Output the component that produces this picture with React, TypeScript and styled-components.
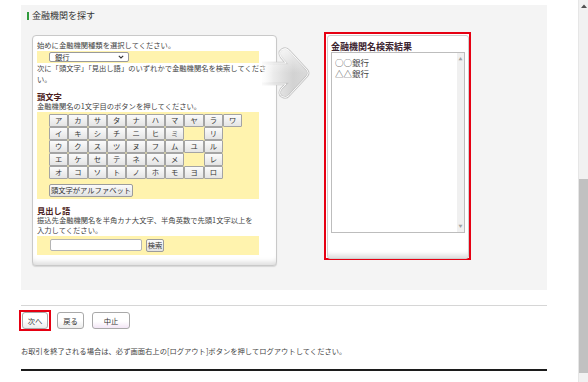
import React from 'react';
import styled, {createGlobalStyle} from "styled-components";

const GlobalStyle = createGlobalStyle`
  html, body {
    margin: 0;
    padding: 0;
    background: #ffffff;
    overflow: hidden;
  }
  body {
    font-family: "Noto Sans CJK JP", "Noto Sans", sans-serif;
    color: #333333;
  }
`;

const Page = styled.div`
  display: flex;
  width: 588px;
  height: 382px;
`;

const Main = styled.div`
  width: 578px;
  box-sizing: border-box;
  padding: 5px 31px 0 21px;
`;

const Panel = styled.section`
  height: 285px;
  background: #f4f4f4;
`;

const Title = styled.h2`
  display: flex;
  align-items: center;
  gap: 3px;
  margin: 0;
  padding: 5px 0 0 6px;
  font-size: 9px;
  line-height: 12px;
  font-weight: normal;
  color: #333;

  &::before {
    content: "";
    width: 2px;
    height: 8px;
    background: #2f9a3c;
  }
`;

const SearchRow = styled.div`
  display: flex;
  align-items: flex-start;
  margin-top: 10px;
  padding-left: 11px;
`;

const SearchCard = styled.div`
  width: 245px;
  height: 231px;
  margin-top: 3px;
  box-sizing: border-box;
  padding: 4px 4px 0 4px;
  background: #ffffff;
  border: 1px solid #c9c9c9;
  border-radius: 4px;
  box-shadow: inset 0 -6px 5px -3px rgba(0, 0, 0, .13), 0 1px 1px rgba(0, 0, 0, .12);
  font-size: 7.3px;
`;

const Text = styled.p<{ $lh?: number }>`
  margin: 0;
  line-height: ${p => p.$lh ?? 11}px;
  color: #444;
`;

const Heading = styled.h3`
  margin: 6px 0 0;
  font-size: 8.3px;
  line-height: 10px;
  font-weight: bold;
  color: #4a2020;
`;

const Band = styled.div<{ $pad: string }>`
  width: 222px;
  box-sizing: border-box;
  padding: ${p => p.$pad};
  background: #fff3ae;
`;

const SelectBox = styled.div`
  display: flex;
  align-items: center;
  justify-content: space-between;
  width: 80px;
  height: 10px;
  box-sizing: border-box;
  padding: 0 4px 0 5px;
  background: #ffffff;
  border: 1px solid #9a9a9a;
  border-radius: 2px;
  font-size: 7.3px;
  line-height: 8px;
  color: #333;
`;

const KanaGrid = styled.div`
  display: grid;
  grid-template-columns: repeat(10, 19.35px);
  grid-auto-rows: 13px;
`;

const KanaButton = styled.button`
  margin: 0;
  padding: 0;
  box-sizing: border-box;
  border: 1px solid #a4a4a4;
  border-radius: 1px;
  background: linear-gradient(#fbfbfb, #e4e4e4);
  font-family: inherit;
  font-size: 7.3px;
  line-height: 11px;
  color: #333;
`;

const SmallButton = styled.button<{ $w: number; $gap?: number }>`
  display: block;
  width: ${p => p.$w}px;
  height: 13px;
  margin: ${p => p.$gap ?? 0}px 0 0;
  padding: 0;
  box-sizing: border-box;
  border: 1px solid #9c9c9c;
  border-radius: 2px;
  background: linear-gradient(#fbfbfb, #e2e2e2);
  font-family: inherit;
  font-size: 7.3px;
  line-height: 11px;
  color: #333;
`;

const InputRow = styled.div`
  display: flex;
  align-items: center;
  gap: 4px;
`;

const TextInput = styled.input`
  width: 92px;
  height: 12px;
  margin: 0;
  padding: 0 2px;
  box-sizing: border-box;
  border: 1px solid #b4b4b4;
  border-radius: 2px;
  background: #ffffff;
`;

const ArrowBox = styled.div`
  width: 48px;
  height: 54px;
  margin: 15px 0 0 -15px;
  flex: none;
`;

const Highlight = styled.div`
  flex: none;
  border: 2px solid #e60012;
  background: #ffffff;
`;

const ResultFrame = styled(Highlight)`
  width: 147px;
  height: 228px;
  margin-left: 14px;
  box-sizing: border-box;
  padding: 1px 0 0 1px;
`;

const ResultCard = styled.div`
  height: 224px;
  box-sizing: border-box;
  padding: 5px 3px 0 3px;
  border: 1px solid #cfcfcf;
  border-radius: 3px;
  box-shadow: inset 0 -7px 5px -4px rgba(0, 0, 0, .14);
`;

const ResultTitle = styled.h3`
  margin: 0;
  font-size: 9px;
  line-height: 11px;
  font-weight: bold;
  color: #3c2430;
`;

const ListBox = styled.div`
  display: flex;
  width: 134px;
  height: 181px;
  box-sizing: border-box;
  border: 1px solid #bdbdbd;
  background: #fff;
`;

const ListItems = styled.ul`
  flex: 1;
  margin: 0;
  padding: 4px 0 0 3px;
  list-style: none;
  font-size: 8.5px;
  line-height: 10.7px;
  color: #444;
`;

const ListScroll = styled.div`
  display: flex;
  flex-direction: column;
  justify-content: space-between;
  align-items: center;
  width: 7px;
  padding: 4px 0;
  background: #f0f0f0;
  font-size: 4px;
  line-height: 4px;
  color: #a0a0a0;
`;

const Divider = styled.hr`
  margin: 15px 0 0;
  border: none;
  height: 1px;
  background: #d6d6d6;
`;

const ButtonRow = styled.div`
  display: flex;
  align-items: center;
  margin: 4px 0 0 -2px;
`;

const NavFrame = styled(Highlight)`
  padding: 0 1px;
  margin-right: 6px;
`;

const NavButton = styled.button<{ $w: number; $tone?: "pink" }>`
  display: block;
  width: ${p => p.$w}px;
  height: 17px;
  margin: 0 8px 0 0;
  padding: 0;
  box-sizing: border-box;
  border: 1px solid #a9a9a9;
  border-radius: 3px;
  background: ${p => p.$tone === "pink"
    ? "linear-gradient(#ffffff 55%, #f3e6f6)"
    : "linear-gradient(#ffffff 50%, #ececec)"};
  font-family: inherit;
  font-size: 7.3px;
  color: #333;

  ${NavFrame} & {
    margin: 0;
  }
`;

const Note = styled.p`
  margin: 15px 0 0;
  font-size: 7.3px;
  line-height: 10px;
  color: #444;
`;

const Rule = styled.div`
  margin-top: 13px;
  height: 2px;
  background: #1c1c1c;
`;

const PageScroll = styled.div`
  display: flex;
  flex-direction: column;
  width: 10px;
  background: #f1f1f1;
  border-left: 1px solid #e6e6e6;
  box-sizing: border-box;
`;

const ScrollArrow = styled.div`
  display: flex;
  justify-content: center;
  align-items: center;
  height: 11px;
`;

const ScrollThumb = styled.div<{ $top: number; $h: number }>`
  margin: ${p => p.$top}px 0 0 0;
  height: ${p => p.$h}px;
  background: #c1c1c1;
`;

const KANA = [
    ["ア", "カ", "サ", "タ", "ナ", "ハ", "マ", "ヤ", "ラ", "ワ"],
    ["イ", "キ", "シ", "チ", "ニ", "ヒ", "ミ", "", "リ", ""],
    ["ウ", "ク", "ス", "ツ", "ヌ", "フ", "ム", "ユ", "ル", ""],
    ["エ", "ケ", "セ", "テ", "ネ", "ヘ", "メ", "", "レ", ""],
    ["オ", "コ", "ソ", "ト", "ノ", "ホ", "モ", "ヨ", "ロ", ""],
];

const ARROW_PATH = "M-4,16 L24,16 L19,10 Q16,5 20,2.5 Q24,0 27,3.5 L45,23 Q47.5,26 45,29 L27,48.5 Q24,52 20,49.5 Q16,47 19,42 L24,37 L-4,37 Z";

function Arrow() {
    return (
        <ArrowBox>
            <svg width="48" height="54" viewBox="0 0 48 54">
                <defs>
                    <linearGradient id="arrowFill" x1="0" y1="0" x2="1" y2="0">
                        <stop offset="0" stopColor="#ffffff" stopOpacity="0" />
                        <stop offset="0.3" stopColor="#ececec" />
                        <stop offset="0.7" stopColor="#d2d2d2" />
                        <stop offset="1" stopColor="#dadada" />
                    </linearGradient>
                    <linearGradient id="arrowEdge" x1="0" y1="0" x2="1" y2="0">
                        <stop offset="0" stopColor="#d0d0d0" stopOpacity="0" />
                        <stop offset="0.4" stopColor="#c8c8c8" />
                        <stop offset="1" stopColor="#c0c0c0" />
                    </linearGradient>
                    <linearGradient id="arrowShine" x1="0" y1="0" x2="0" y2="1">
                        <stop offset="0" stopColor="#ffffff" stopOpacity="0.7" />
                        <stop offset="0.5" stopColor="#ffffff" stopOpacity="0" />
                    </linearGradient>
                </defs>
                <path d={ARROW_PATH} fill="url(#arrowFill)" stroke="url(#arrowEdge)" strokeWidth="2.4" />
                <path d={ARROW_PATH} fill="url(#arrowShine)" stroke="#ffffff" strokeWidth="0.9" />
            </svg>
        </ArrowBox>
    );
}

function App() {
    return (
        <Page>
            <GlobalStyle />
            <Main>
                <Panel>
                    <Title>金融機関を探す</Title>
                    <SearchRow>
                        <SearchCard>
                            <Text>始めに金融機関種類を選択してください。</Text>
                            <Band $pad="1px 12px">
                                <SelectBox>
                                    銀行
                                    <svg width="6" height="4" viewBox="0 0 6 4">
                                        <path d="M0.8,0.8 L3,3 L5.2,0.8" fill="none" stroke="#333" strokeWidth="1.1" />
                                    </svg>
                                </SelectBox>
                            </Band>
                            <Text>次に「頭文字」「見出し語」のいずれかで金融機関名を検索してください。</Text>
                            <Heading>頭文字</Heading>
                            <Text $lh={10.5}>金融機関名の1文字目のボタンを押してください。</Text>
                            <Band $pad="2px 12px 2px">
                                <KanaGrid>
                                    {KANA.flat().map((k, i) =>
                                        k ? <KanaButton key={i}>{k}</KanaButton> : <span key={i} />
                                    )}
                                </KanaGrid>
                                <SmallButton $w={84} $gap={5}>頭文字がアルファベット</SmallButton>
                            </Band>
                            <Heading>見出し語</Heading>
                            <Text $lh={10.5}>振込先金融機関名を半角カナ大文字、半角英数で先頭1文字以上を<br />入力してください。</Text>
                            <Band $pad="3px 13px 3px">
                                <InputRow>
                                    <TextInput />
                                    <SmallButton $w={18}>検索</SmallButton>
                                </InputRow>
                            </Band>
                        </SearchCard>
                        <Arrow />
                        <ResultFrame>
                            <ResultCard>
                                <ResultTitle>金融機関名検索結果</ResultTitle>
                                <ListBox>
                                    <ListItems>
                                        <li>○○銀行</li>
                                        <li>△△銀行</li>
                                    </ListItems>
                                    <ListScroll>
                                        <span>▲</span>
                                        <span>▼</span>
                                    </ListScroll>
                                </ListBox>
                            </ResultCard>
                        </ResultFrame>
                    </SearchRow>
                </Panel>
                <Divider />
                <ButtonRow>
                    <NavFrame>
                        <NavButton $w={26}>次へ</NavButton>
                    </NavFrame>
                    <NavButton $w={27}>戻る</NavButton>
                    <NavButton $w={38} $tone="pink">中止</NavButton>
                </ButtonRow>
                <Note>お取引を終了される場合は、必ず画面右上の[ログアウト]ボタンを押してログアウトしてください。</Note>
                <Rule />
            </Main>
            <PageScroll>
                <ScrollArrow>
                    <svg width="6" height="4" viewBox="0 0 6 4">
                        <path d="M0,4 L3,0.5 L6,4 Z" fill="#505050" />
                    </svg>
                </ScrollArrow>
                <ScrollThumb $top={168} $h={194} />
            </PageScroll>
        </Page>
    );
}

export default App;
